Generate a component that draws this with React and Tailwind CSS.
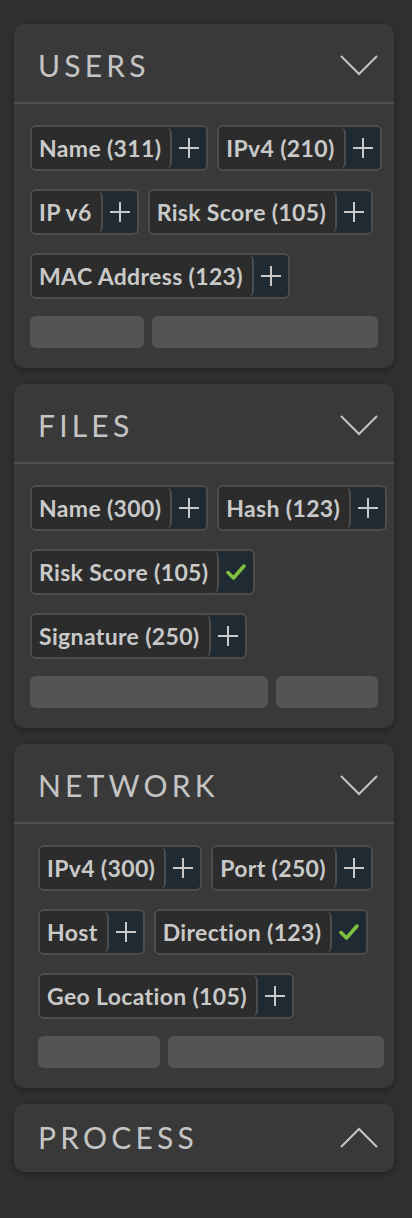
import React from 'react';

const sections = [
  {
    title: 'USERS',
    open: true,
    pad: 'pl-4 pr-4',
    chips: [
      { label: 'Name (311)' },
      { label: 'IPv4 (210)' },
      { label: 'IP v6' },
      { label: 'Risk Score (105)' },
      { label: 'MAC Address (123)' },
    ],
    bars: ['w-[114px]', 'flex-1'],
  },
  {
    title: 'FILES',
    open: true,
    pad: 'pl-4 pr-4',
    chips: [
      { label: 'Name (300)' },
      { label: 'Hash (123)' },
      { label: 'Risk Score (105)', checked: true },
      { label: 'Signature (250)' },
    ],
    bars: ['flex-1', 'w-[102px]'],
  },
  {
    title: 'NETWORK',
    open: true,
    pad: 'pl-6 pr-2.5',
    chips: [
      { label: 'IPv4 (300)' },
      { label: 'Port (250)' },
      { label: 'Host' },
      { label: 'Direction (123)', checked: true },
      { label: 'Geo Location (105)' },
    ],
    bars: ['w-[122px]', 'flex-1'],
  },
  { title: 'PROCESS', open: false },
];

const Plus = () => (
  <svg width="20" height="20" viewBox="0 0 20 20" fill="none" stroke="#c9c9c9" strokeWidth="2">
    <path d="M10 0v20M0 10h20" />
  </svg>
);

const Check = () => (
  <svg width="20" height="16" viewBox="0 0 20 16" fill="none" stroke="#7fc241" strokeWidth="3.5" strokeLinecap="round" strokeLinejoin="round">
    <path d="M2 8.5l5.5 5.5L18 2" />
  </svg>
);

const Chevron = ({ up }) => (
  <svg width="38" height="21" viewBox="0 0 38 21" fill="none" stroke="#c4c4c4" strokeWidth="2">
    <path d={up ? 'M1 20L19 2l18 18' : 'M1 1l18 18L37 1'} />
  </svg>
);

const Chip = ({ label, checked }) => (
  <div className="flex h-[46px] rounded-md border-2 border-[#4c4c4c] bg-[#1f2a33] overflow-hidden">
    <div className="flex items-center whitespace-nowrap rounded-md border-r-2 border-[#4c4c4c] bg-[#2c2c2c] pl-[7px] pr-[9px] text-[23px] leading-[26px] tracking-[0.015em] font-bold text-[#c9c9c9]">
      {label}
    </div>
    <div className="flex w-[34px] items-center justify-center">
      {checked ? <Check /> : <Plus />}
    </div>
  </div>
);

const Section = ({ title, open, pad, chips, bars }) => (
  <div className="w-[380px] rounded-[10px] bg-[#393939] shadow-[0_2px_6px_rgba(0,0,0,0.35)]">
    <div className={`flex items-center justify-between pl-[24px] pr-[16px] ${open ? 'pt-[23px] pb-[19px]' : 'pt-[15px] pb-[17px]'}`}>
      <span className="text-[30px] leading-[36px] tracking-[0.14em] text-[#c4c4c4]">{title}</span>
      <Chevron up={!open} />
    </div>
    {open && (
      <>
        <div className="h-[2px] bg-[#4f4f4f]" />
        <div className={`${pad} pt-[21px] pb-[20px]`}>
          <div className="-mr-[16px] flex flex-wrap gap-x-[9px] gap-y-[18px]">
            {chips.map((c, i) => (
              <Chip key={i} label={c.label} checked={c.checked} />
            ))}
          </div>
          <div className="mt-[17px] flex gap-2">
            {bars.map((b, i) => (
              <div key={i} className={`${b} h-[32px] rounded-md bg-[#545454]`} />
            ))}
          </div>
        </div>
      </>
    )}
  </div>
);

export default function App() {
  return (
    <div className="min-h-[1218px] bg-[#303030] pl-[14px] pt-[24px] font-['Lato',sans-serif]">
      <div className="flex flex-col gap-4">
        {sections.map((s) => (
          <Section key={s.title} {...s} />
        ))}
      </div>
    </div>
  );
}
